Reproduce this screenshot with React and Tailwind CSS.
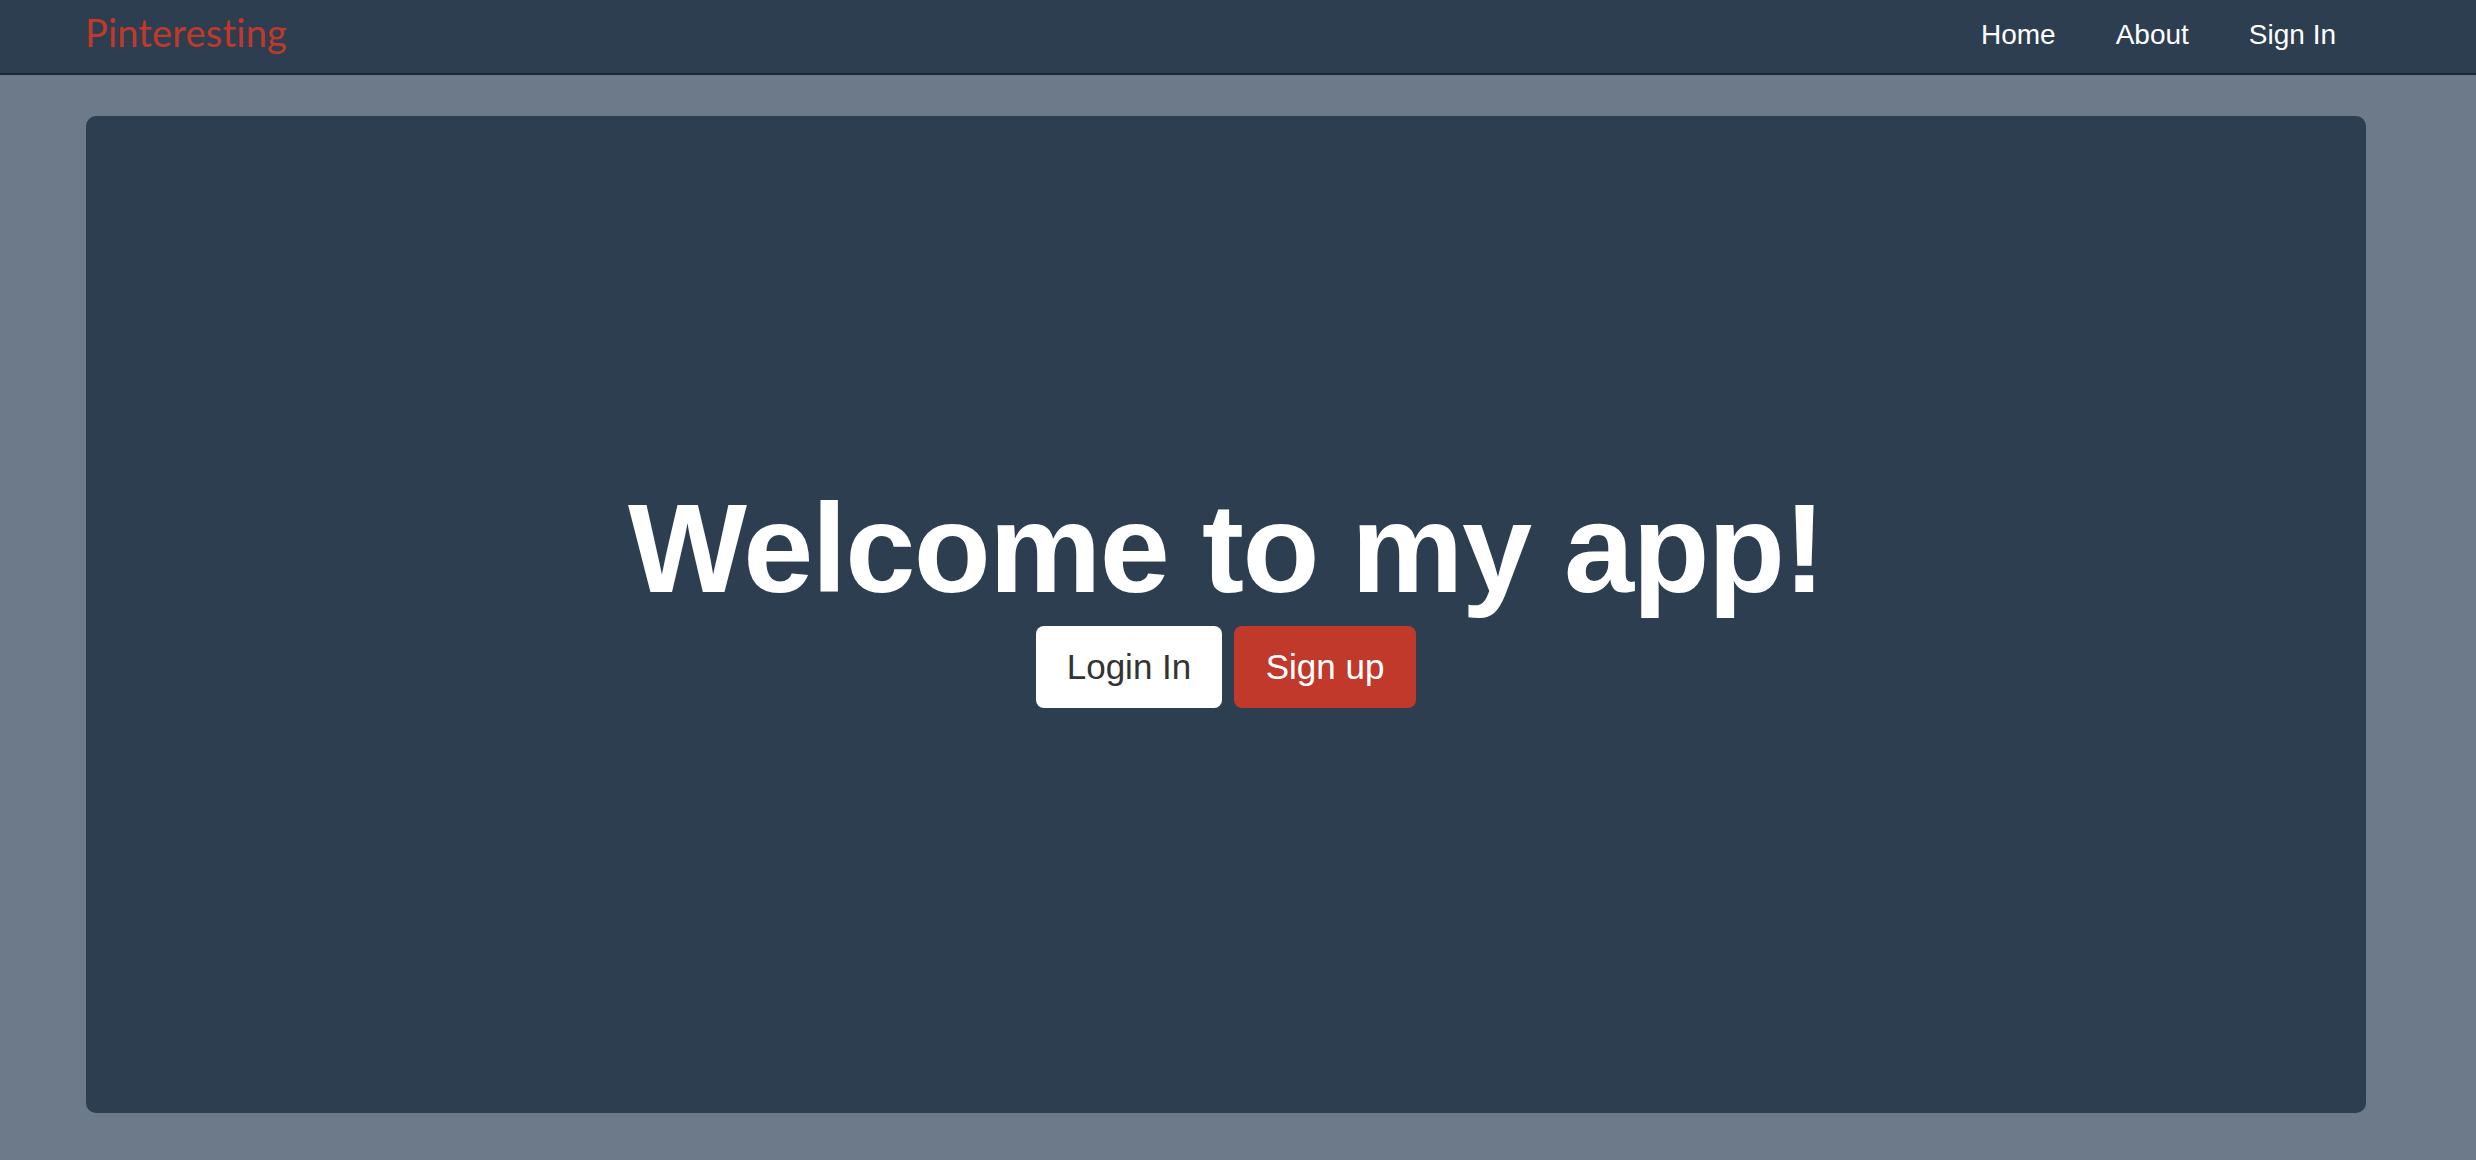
/**
 * Landing page - navbar plus a centered welcome card
 */
export default function App() {
  const links = ['Home', 'About', 'Sign In'];

  return (
    <div className="min-h-[1160px] bg-[#6c7a89] font-['Liberation_Sans',Arial,sans-serif]">
      {/* Navbar */}
      <nav className="h-[75px] bg-[#2c3e50] border-b-2 border-[#1d2935]">
        <div className="h-full flex items-center justify-between pl-[85px] pr-[110px] pb-1">
          <a href="#" className="pb-[5px] text-[38px] text-[#c0392b] font-['Lato',sans-serif] tracking-[0.2px]">
            Pinteresting
          </a>
          <ul className="flex items-center">
            {links.map((link) => (
              <li key={link}>
                <a href="#" className="block px-[30px] text-[28px] text-white">
                  {link}
                </a>
              </li>
            ))}
          </ul>
        </div>
      </nav>

      {/* Hero card */}
      <main className="pt-[41px] pb-[47px] pl-[86px] pr-[110px]">
        <section className="h-[997px] rounded-[10px] bg-[#2c3e50] flex flex-col items-center justify-center pb-[35px]">
          <h1 className="text-[126px] leading-none font-bold text-white tracking-[-1.5px] mb-[14px]">
            Welcome to my app!
          </h1>
          <div className="flex gap-3">
            <button className="w-[186px] h-[82px] rounded-lg bg-white text-[#333333] text-[35px] flex items-center justify-center">
              Login In
            </button>
            <button className="w-[182px] h-[82px] rounded-lg bg-[#c0392b] text-white text-[35px] flex items-center justify-center">
              Sign up
            </button>
          </div>
        </section>
      </main>
    </div>
  );
}
